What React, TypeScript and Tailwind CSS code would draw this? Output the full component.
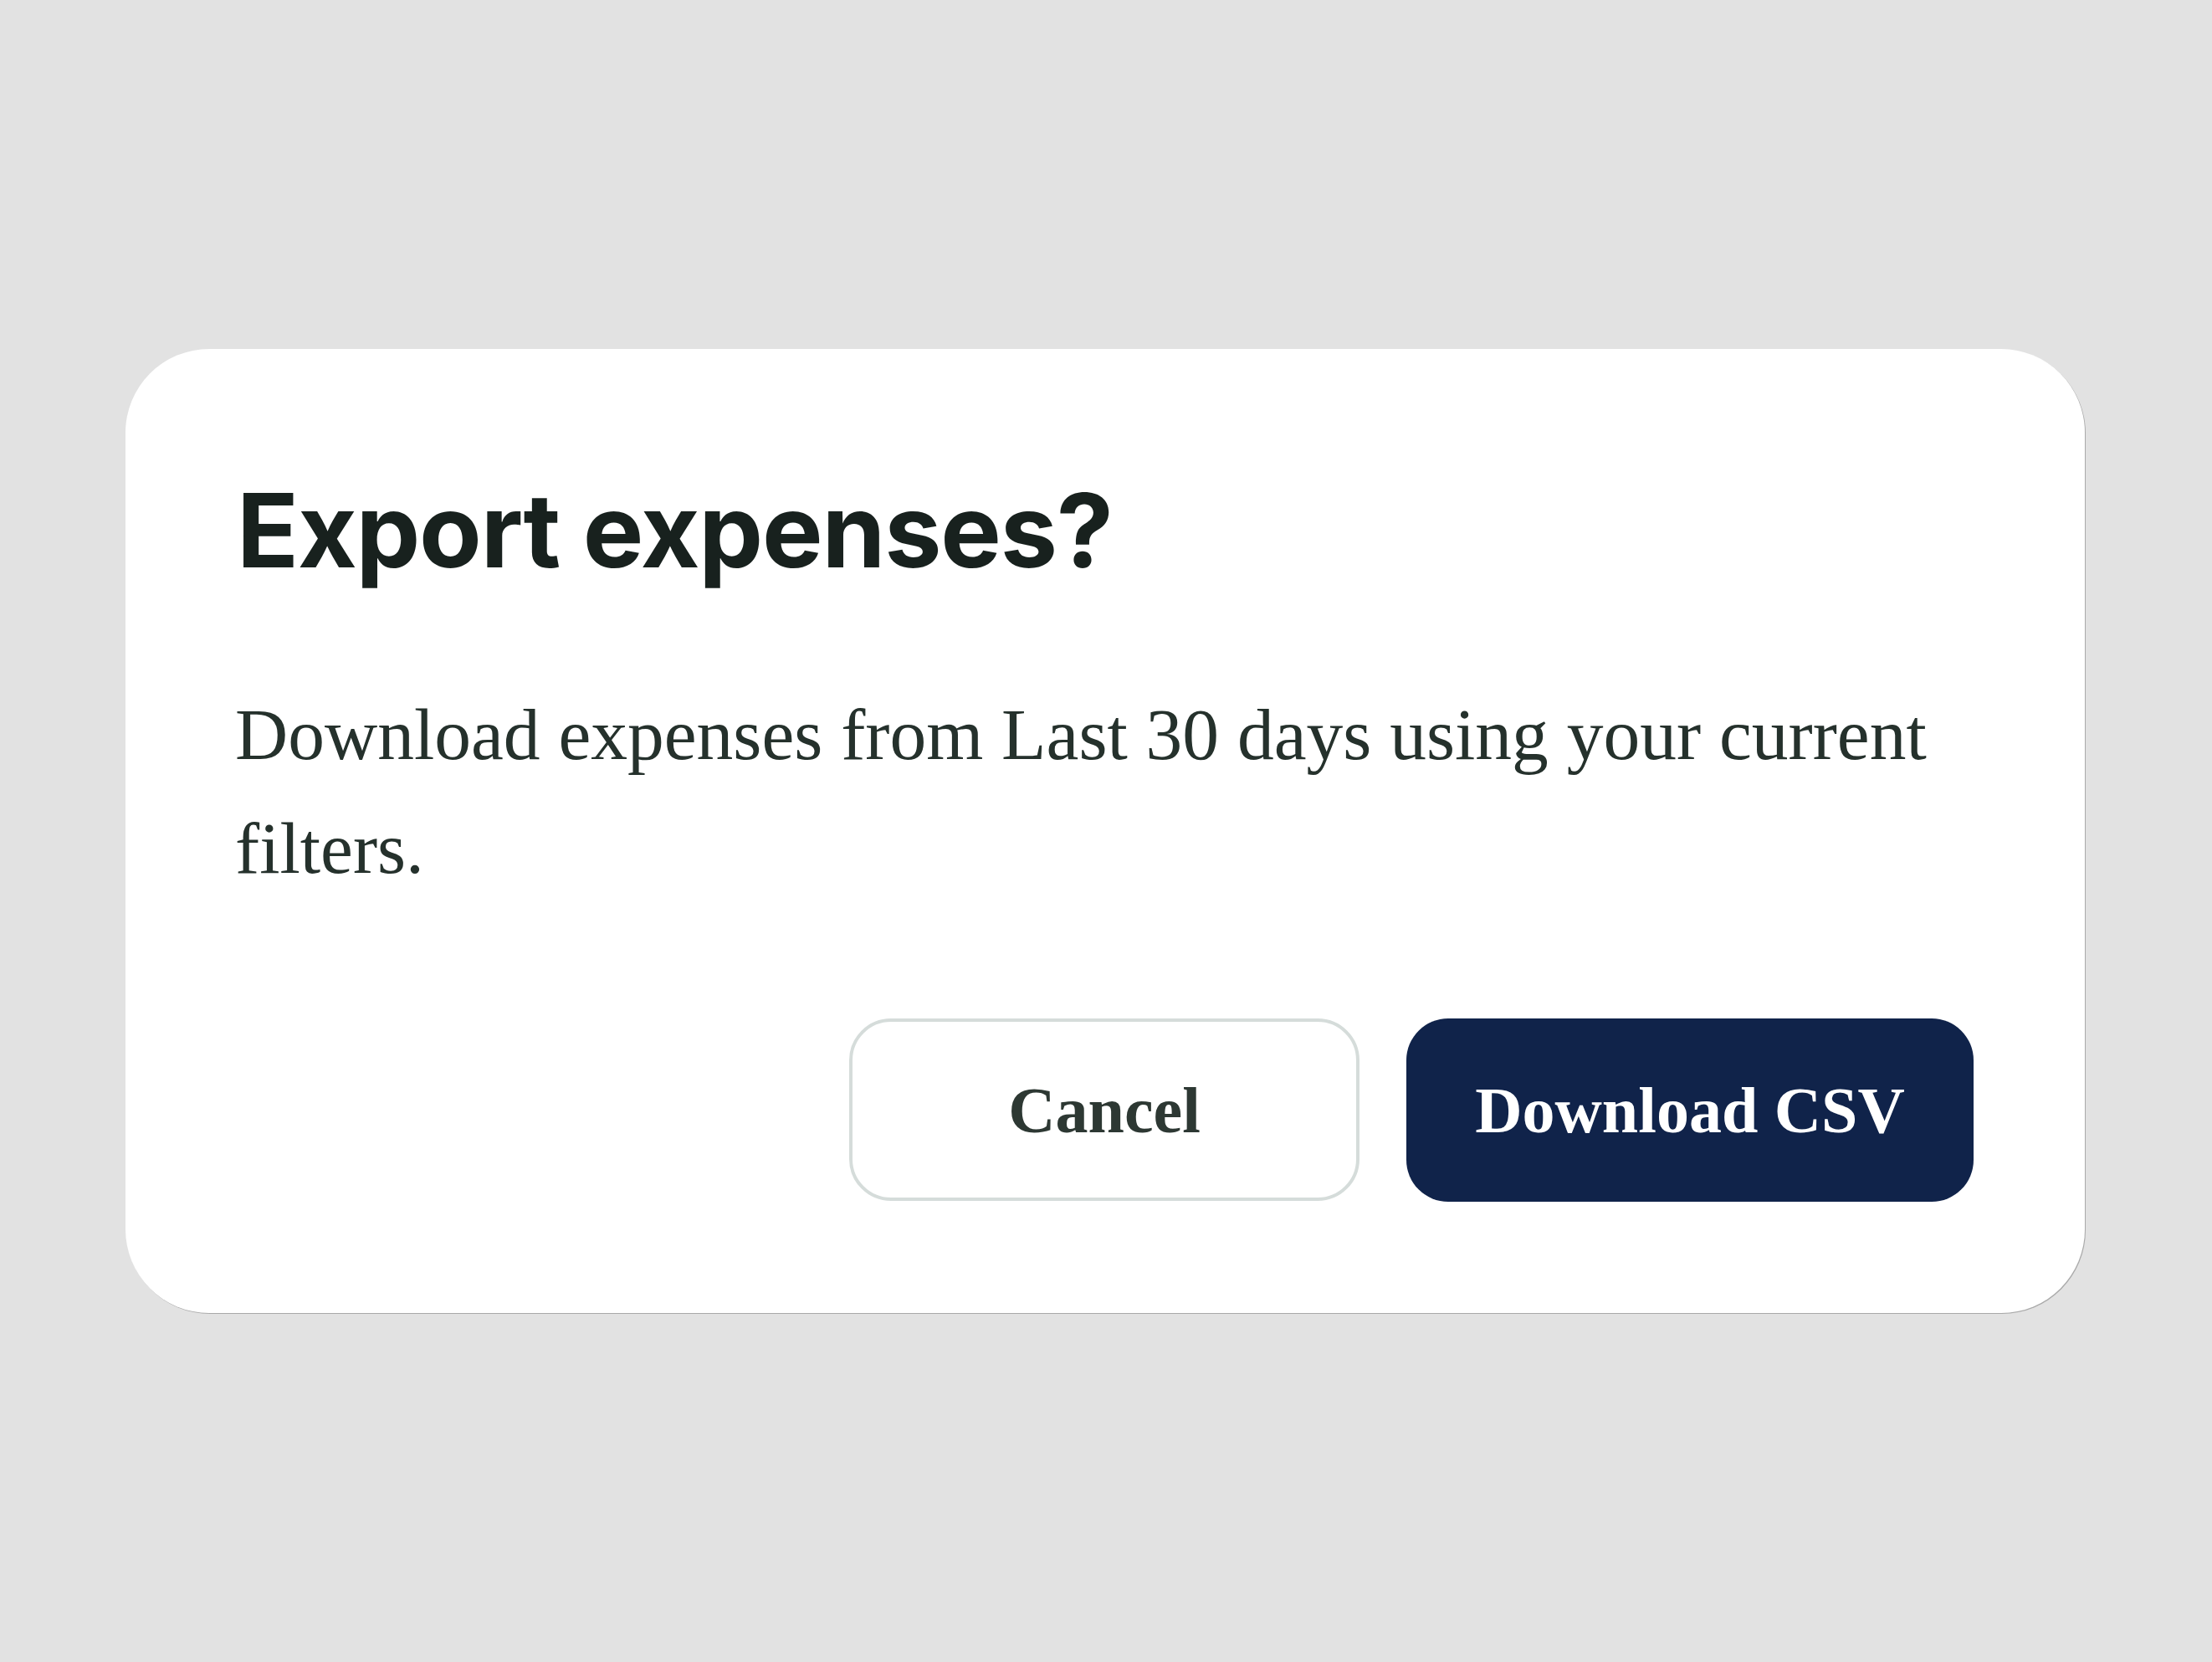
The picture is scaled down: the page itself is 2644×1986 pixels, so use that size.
import { useState } from 'react';

const SERIF = "font-['Liberation_Serif','Times_New_Roman',serif]";

type ExportDialogProps = {
  range: string;
  onCancel: () => void;
  onConfirm: () => void;
};

function ExportDialog({ range, onCancel, onConfirm }: ExportDialogProps): React.JSX.Element {
  const message = `Download expenses from ${range} using your current filters.`;

  return (
    <div
      role="dialog"
      aria-labelledby="export-title"
      className="w-[2342px] rounded-[100px] bg-white px-[133px] pt-[144px] pb-[133px] shadow-[1px_1px_0_#a9a9a9]"
    >
      <h2
        id="export-title"
        className="font-['Inter',sans-serif] text-[122px] font-bold leading-[145px] tracking-[-0.01em] text-[#18211e]"
      >
        Export expenses?
      </h2>

      <p className={`mt-[104px] -ml-[2px] text-[87.5px] leading-[136px] text-[#25312c] ${SERIF}`}>
        {message}
      </p>

      {/* actions, right aligned */}
      <div className="mt-[135px] flex justify-end gap-[56px]">
        <button
          type="button"
          onClick={onCancel}
          className={`h-[218px] w-[610px] rounded-[50px] border-[4px] border-[#d5dcda] bg-white text-[78px] font-bold text-[#2d3833] ${SERIF}`}
        >
          Cancel
        </button>
        <button
          type="button"
          onClick={onConfirm}
          className={`h-[219px] w-[678px] rounded-[50px] bg-[#10234a] text-[78px] font-bold text-white ${SERIF}`}
        >
          Download CSV
        </button>
      </div>
    </div>
  );
}

export default function App(): React.JSX.Element {
  const [open, setOpen] = useState(true);

  return (
    <div className="flex min-h-screen w-full items-start bg-[#e2e2e2] pl-[150px] pt-[417px]">
      {open && (
        <ExportDialog
          range="Last 30 days"
          onCancel={() => setOpen(false)}
          onConfirm={() => setOpen(false)}
        />
      )}
    </div>
  );
}
